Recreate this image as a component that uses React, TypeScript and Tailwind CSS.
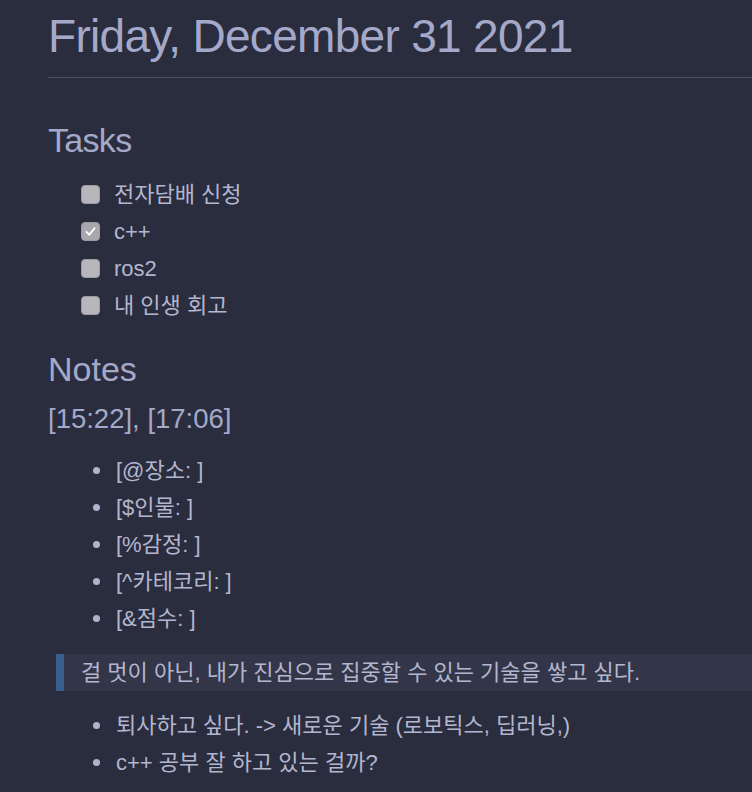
import React from 'react';

const font = { fontFamily: '"Liberation Sans", "Noto Sans CJK KR", sans-serif' };

const tasks = [
  { label: '전자담배 신청', done: false },
  { label: 'c++', done: true },
  { label: 'ros2', done: false },
  { label: '내 인생 회고', done: false },
];

const tags = ['[@장소: ]', '[$인물: ]', '[%감정: ]', '[^카테코리: ]', '[&점수: ]'];

const thoughts = ['퇴사하고 싶다. -> 새로운 기술 (로보틱스, 딥러닝,)', 'c++ 공부 잘 하고 있는 걸까?'];

function Checkbox({ checked }: { checked: boolean }) {
  return (
    <span
      className={`flex h-[19px] w-[19px] shrink-0 items-center justify-center rounded-[4px] border border-[#9c9ca3] ${
        checked ? 'bg-[#a7a7ad]' : 'bg-[#b6b6bb]'
      }`}
    >
      {checked && (
        <svg viewBox="0 0 16 16" className="h-[13px] w-[13px]" fill="none">
          <path d="M3 8.5 6.5 12 13 4" stroke="#ffffff" strokeWidth="2.4" strokeLinecap="round" strokeLinejoin="round" />
        </svg>
      )}
    </span>
  );
}

function Bullet({ text }: { text: string }) {
  return (
    <li className="flex h-[37px] items-center">
      <span className="ml-[45px] h-[7px] w-[7px] shrink-0 rounded-full bg-[#b0b3cc]" />
      <span className="ml-[16px] whitespace-nowrap">{text}</span>
    </li>
  );
}

export default function App() {
  return (
    <div className="min-h-screen w-full overflow-hidden bg-[#2a2d3e] pl-[48px] text-[22px] text-[#b3b6cf]" style={font}>
      {/* Title */}
      <h1 className="whitespace-nowrap text-[46px] leading-[72px] tracking-[-0.015em] text-[#a5a9c9]">
        Friday, December 31 2021
      </h1>
      <div className="mt-[5px] h-px bg-[#4e5165]" />

      {/* Tasks */}
      <h2 className="mt-[38px] text-[34px] leading-[48px] tracking-[-0.02em] text-[#a5a9c9]">Tasks</h2>
      <ul className="mt-[12px] pl-[33px]">
        {tasks.map((t) => (
          <li key={t.label} className="flex h-[37px] items-center gap-[14px]">
            <Checkbox checked={t.done} />
            <span className="whitespace-nowrap">{t.label}</span>
          </li>
        ))}
      </ul>

      {/* Notes */}
      <h2 className="mt-[21px] text-[34px] leading-[48px] text-[#a5a9c9]">Notes</h2>
      <p className="mt-[8px] text-[27.5px] leading-[36px] text-[#a5a9c9]">[15:22], [17:06]</p>
      <ul className="mt-[15px]">
        {tags.map((t) => (
          <Bullet key={t} text={t} />
        ))}
      </ul>

      <blockquote className="mt-[17px] ml-[8px] flex h-[37px] items-center border-l-[8px] border-[#3a5e8f] bg-[#333648] pl-[17px]">
        <span className="whitespace-nowrap">걸 멋이 아닌, 내가 진심으로 집중할 수 있는 기술을 쌓고 싶다.</span>
      </blockquote>

      <ul className="mt-[16px]">
        {thoughts.map((t) => (
          <Bullet key={t} text={t} />
        ))}
      </ul>
    </div>
  );
}
